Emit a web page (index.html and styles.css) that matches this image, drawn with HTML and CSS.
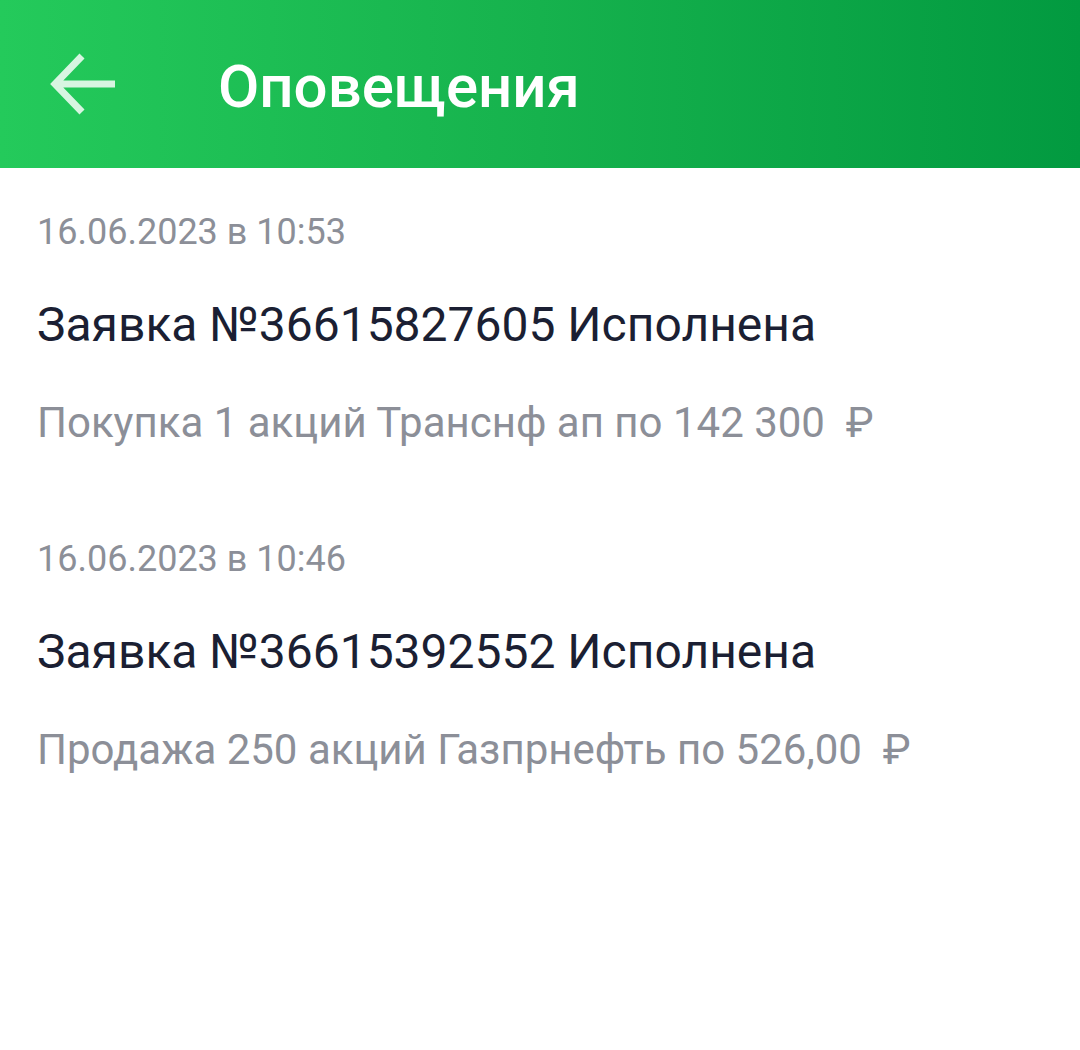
FILE: index.html
```html
<!DOCTYPE html>
<html lang="ru">
<head>
<meta charset="utf-8">
<link rel="stylesheet" href="styles.css">
</head>
<body>
<header class="topbar">
  <div class="back">
    <svg width="68" height="68" viewBox="0 0 68 68"><path d="M65 34H7M32 6L5 34L32 62" fill="none" stroke="currentColor" stroke-width="7" stroke-linecap="butt" stroke-linejoin="miter"/></svg>
  </div>
  <h1 class="title">Оповещения</h1>
</header>
<main class="list">
  <section class="item">
    <div class="date">16.06.2023 в 10:53</div>
    <div class="head">Заявка №36615827605 Исполнена</div>
    <div class="desc">Покупка 1 акций Транснф ап по 142 300&nbsp; ₽</div>
  </section>
  <section class="item">
    <div class="date">16.06.2023 в 10:46</div>
    <div class="head">Заявка №36615392552 Исполнена</div>
    <div class="desc">Продажа 250 акций Газпрнефть по 526,00&nbsp; ₽</div>
  </section>
</main>
</body>
</html>
```
FILE: styles.css
```css
html, body { margin: 0; padding: 0; background: #fff; }
body { font-family: Roboto, "Noto Sans", sans-serif; width: 1080px; }
.topbar {
  height: 168px;
  display: flex;
  align-items: center;
  background: linear-gradient(90deg, #24ca5b 0%, #16b24d 50%, #029a40 100%);
  box-sizing: border-box;
  padding-left: 50px;
}
.back { color: rgba(255,255,255,0.82); width: 68px; height: 68px; display: flex; }
.title {
  margin: 6px 0 0 100px;
  font-size: 60px;
  line-height: 70px;
  font-weight: 500;
  color: #fff;
}
.list { padding: 0 37px; }
.item { padding-top: 44px; padding-bottom: 47px; }
.date { font-size: 36px; color: #8c8f98; line-height: 40px; }
.head { font-size: 48px; color: #1b1f33; line-height: 56px; margin-top: 45px; }
.desc { font-size: 42px; color: #8c8f98; line-height: 50px; margin-top: 45px; }
```
